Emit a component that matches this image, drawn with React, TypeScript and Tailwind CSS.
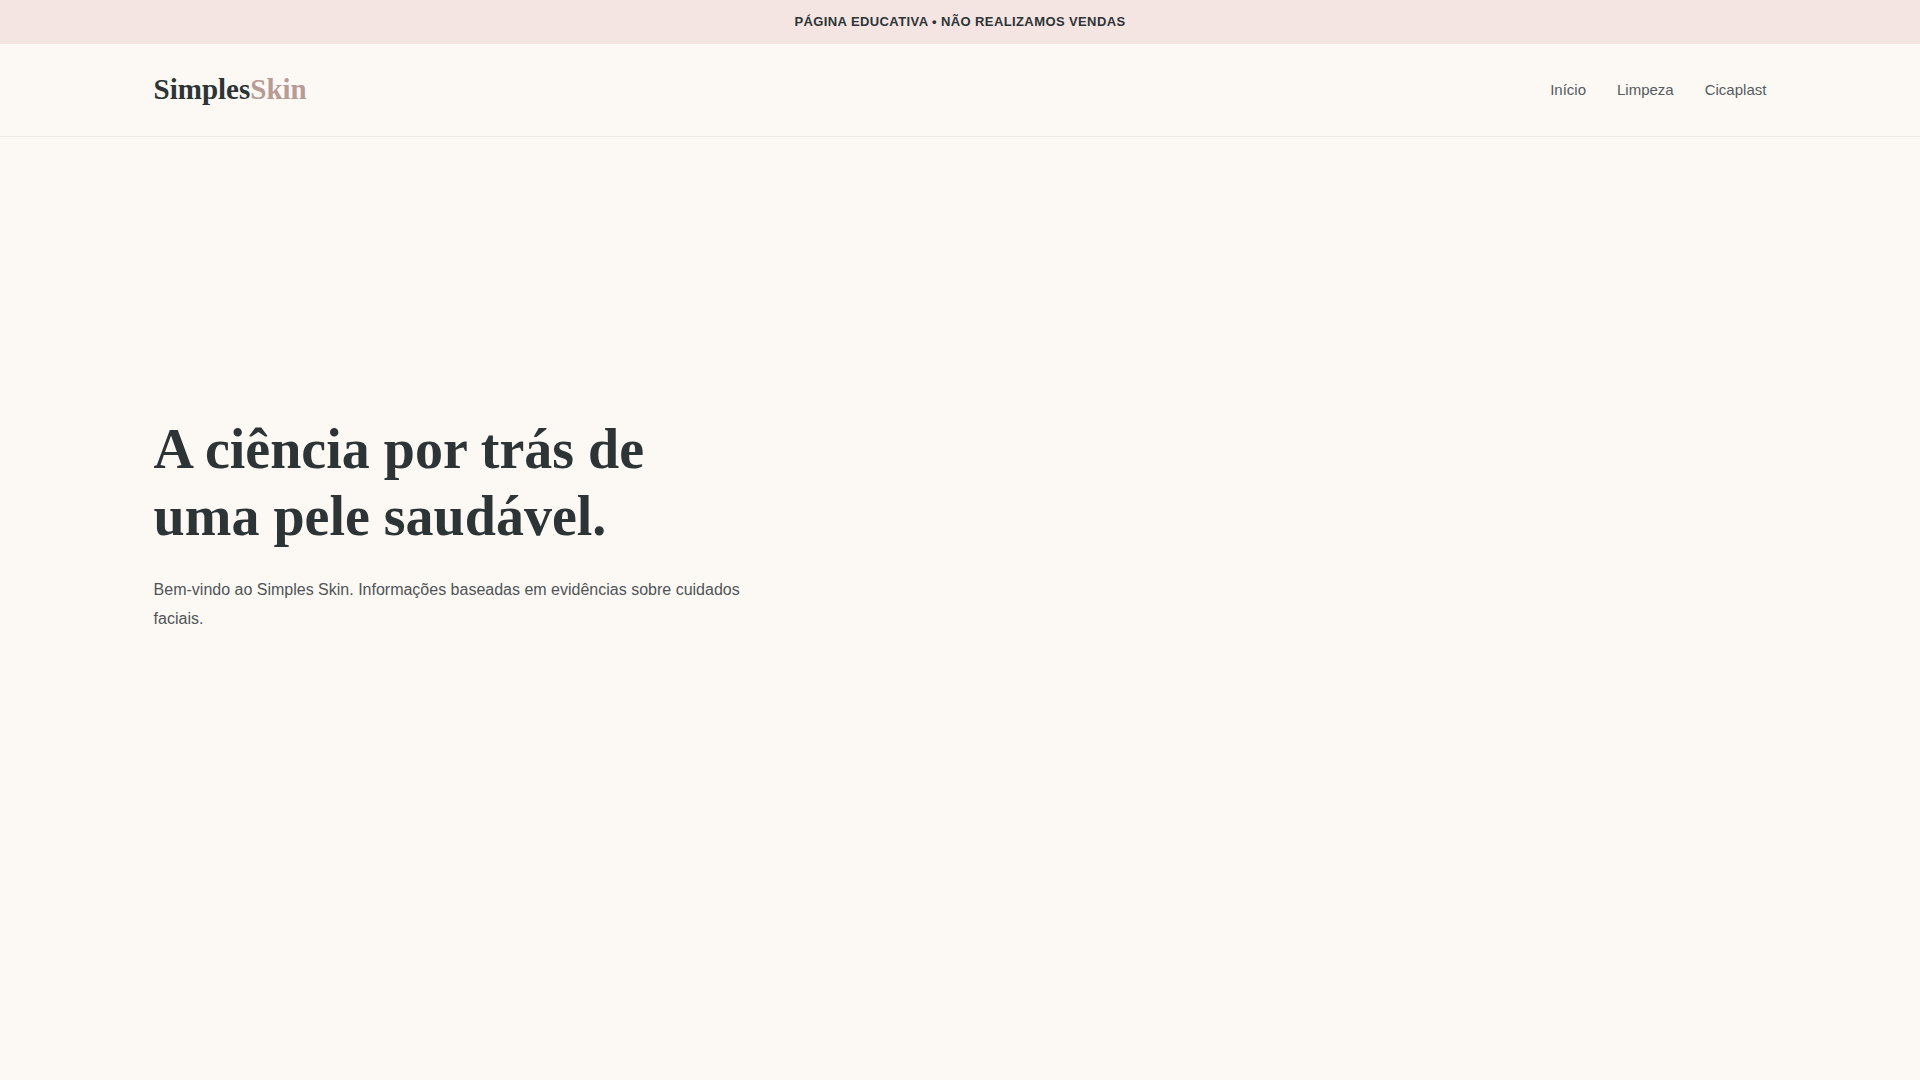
export default function App() {
  return (
    <div className="min-h-screen bg-[#fcf9f5] text-[#2d3436] font-['Liberation_Sans',Arial,sans-serif]">
      {/* aviso superior */}
      <div className="flex h-[44px] items-center justify-center bg-[#f4e4e2] text-[13px] font-bold uppercase tracking-[0.4px] text-[#2d3436]">
        Página educativa • Não realizamos vendas
      </div>

      {/* navegação */}
      <header className="flex h-[93px] items-center justify-between border-b border-[#efe9e5] px-[8%]">
        <a className="-mt-[2px] font-['Liberation_Serif',Georgia,serif] text-[29px] font-bold leading-none">
          Simples<span className="text-[#b99b95]">Skin</span>
        </a>
        <nav className="flex items-center gap-[31px] text-[15px] text-[#555b5e]">
          <a>Início</a>
          <a>Limpeza</a>
          <a>Cicaplast</a>
        </nav>
      </header>

      {/* hero */}
      <main className="px-[8%] pt-[279px]">
        <div className="max-w-[600px]">
          <h1 className="mb-[26px] font-['Liberation_Serif',Georgia,serif] text-[56px] font-bold leading-[1.2]">
            A ciência por trás de uma pele saudável.
          </h1>
          <p className="text-[16px] leading-[1.8] text-[#4f5457]">
            Bem-vindo ao Simples Skin. Informações baseadas em evidências sobre cuidados faciais.
          </p>
        </div>
      </main>
    </div>
  );
}
